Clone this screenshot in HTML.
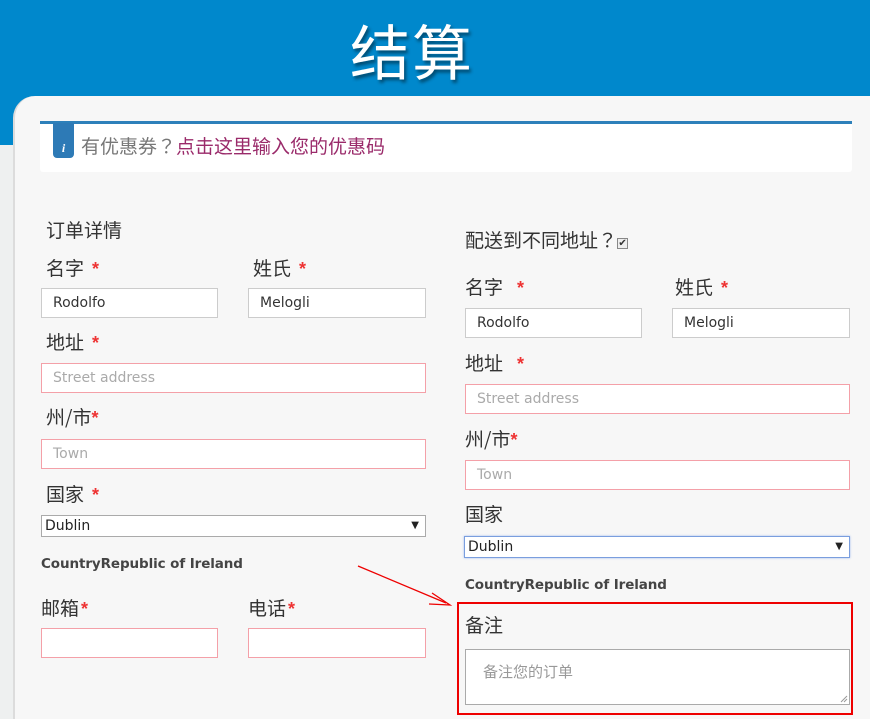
<!DOCTYPE html>
<html><head><meta charset="utf-8"><style>
*{margin:0;padding:0;box-sizing:border-box}
html,body{width:870px;height:719px;overflow:hidden}
body{background:#eef0f0;font-family:"Liberation Sans","Noto Sans CJK SC",sans-serif;position:relative}
.hdr{position:absolute;left:0;top:0;width:870px;height:145px;background:#0088cc}
.title{position:absolute;left:350px;top:6px;font-size:60px;color:#fff;text-shadow:2px 3px 3px rgba(0,0,0,.45);letter-spacing:2px;font-family:"Noto Sans CJK SC",sans-serif}
.card{position:absolute;left:13px;top:96px;width:870px;height:623px;background:#f7f7f7;border-top-left-radius:22px;border-left:2px solid #dcdcdc}
.coupon{position:absolute;left:40px;top:121px;width:812px;height:51px;background:#fff;border-top:3px solid #2d80ba;border-radius:0 0 3px 3px}
.ico{position:absolute;left:53px;top:123px;width:21px;height:35px;background:#2d7ab6;border-radius:0 0 4px 4px;color:#fff;font-style:italic;font-family:"Liberation Serif",serif;font-size:12px;text-align:center;line-height:50px;font-weight:bold}
.ctext{position:absolute;left:81px;top:133px;font-size:19px;color:#777;font-family:"Noto Sans CJK SC",sans-serif;line-height:26px}
.ctext span{color:#9a2a6a}
.q{font-family:"WenQuanYi Zen Hei","Noto Sans CJK JP",sans-serif}
.l{position:absolute;font-size:19px;color:#333;white-space:nowrap;font-family:"Noto Sans CJK SC",sans-serif;line-height:24px}
.l b{color:#e33;font-weight:bold;font-size:18px;margin-left:8px;font-family:"Liberation Sans",sans-serif}
.in{position:absolute;background:#fff;border:1px solid #ccc;height:30px;font-size:14px;color:#333;padding-left:11px;line-height:28px;font-family:"DejaVu Sans","Liberation Sans",sans-serif}
.p{border-color:#f4a0a8;color:#aaa}
.sel{position:absolute;background:#fff;border:1px solid #aaa;height:22px;font-size:14px;color:#222;padding-left:3px;line-height:20px;font-family:"DejaVu Sans",sans-serif}
.sel:after{content:"▼";position:absolute;right:6px;top:0;font-size:10px}
.cn{position:absolute;font-size:13.5px;font-weight:bold;color:#444;font-family:"DejaVu Sans",sans-serif;letter-spacing:-0.1px}
</style></head><body>
<div class="hdr"></div>
<div class="title">结算</div>
<div class="card"></div>
<div class="coupon"></div>
<div class="ico">i</div>
<div class="ctext">有优惠券<span class="q" style="color:#777">？</span><span>点击这里输入您的优惠码</span></div>

<div class="l" style="left:46px;top:218px">订单详情</div>
<div class="l" style="left:46px;top:256px">名字<b>*</b></div>
<div class="l" style="left:253px;top:256px">姓氏<b>*</b></div>
<div class="in" style="left:41px;top:288px;width:177px">Rodolfo</div>
<div class="in" style="left:248px;top:288px;width:178px">Melogli</div>
<div class="l" style="left:46px;top:330px">地址<b>*</b></div>
<div class="in p" style="left:41px;top:363px;width:385px">Street address</div>
<div class="l" style="left:46px;top:405px">州/市<b style="margin-left:0">*</b></div>
<div class="in p" style="left:41px;top:439px;width:385px">Town</div>
<div class="l" style="left:46px;top:482px">国家<b>*</b></div>
<div class="sel" style="left:41px;top:515px;width:385px">Dublin</div>
<div class="cn" style="left:41px;top:556px">CountryRepublic of Ireland</div>
<div class="l" style="left:41px;top:596px">邮箱<b style="margin-left:2px">*</b></div>
<div class="l" style="left:248px;top:596px">电话<b style="margin-left:2px">*</b></div>
<div class="in p" style="left:41px;top:628px;width:177px"></div>
<div class="in p" style="left:248px;top:628px;width:178px"></div>

<div class="l" style="left:465px;top:228px">配送到不同地址<span class="q">？</span><span style="display:inline-block;width:11px;height:11px;border:1px solid #888;background:#eee;font-size:10px;line-height:9px;text-align:center;vertical-align:1px;font-family:'DejaVu Sans',sans-serif">✔</span></div>
<div class="l" style="left:465px;top:275px">名字<b style="margin-left:14px">*</b></div>
<div class="l" style="left:675px;top:275px">姓氏<b>*</b></div>
<div class="in" style="left:465px;top:308px;width:177px">Rodolfo</div>
<div class="in" style="left:672px;top:308px;width:178px">Melogli</div>
<div class="l" style="left:465px;top:351px">地址<b style="margin-left:14px">*</b></div>
<div class="in p" style="left:465px;top:384px;width:385px">Street address</div>
<div class="l" style="left:465px;top:427px">州/市<b style="margin-left:0">*</b></div>
<div class="in p" style="left:465px;top:460px;width:385px">Town</div>
<div class="l" style="left:465px;top:502px">国家</div>
<div class="sel" style="left:464px;top:536px;width:386px;border-color:#7a9ede;box-shadow:0 0 2px #9bb8ee">Dublin</div>
<div class="cn" style="left:465px;top:577px">CountryRepublic of Ireland</div>
<div style="position:absolute;left:457px;top:602px;width:396px;height:113px;border:2px solid #e00"></div>
<div class="l" style="left:465px;top:613px">备注</div>
<div class="in" style="left:465px;top:649px;width:385px;height:56px;border-color:#aaa;color:#999;padding-left:17px;line-height:44px;font-family:'Noto Sans CJK SC',sans-serif;font-size:15px">备注您的订单</div>
<svg style="position:absolute;left:0;top:0" width="870" height="719">
<line x1="358" y1="566" x2="446" y2="603" stroke="#e00" stroke-width="1.3"/>
<path d="M432 593 L450 605 L429 604" fill="none" stroke="#e00" stroke-width="1.3"/>
<path d="M841 702 L847 696 M844 702 L847 699" stroke="#999" stroke-width="1"/>
</svg>
</body></html>
